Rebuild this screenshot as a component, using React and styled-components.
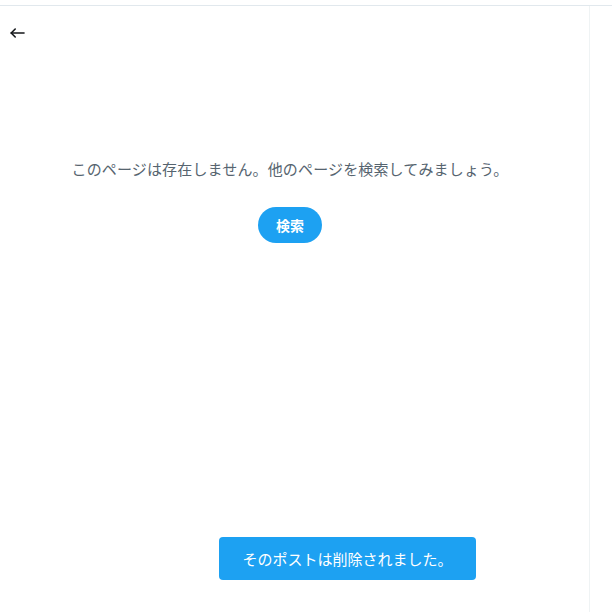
import React from "react";
import styled, { createGlobalStyle } from "styled-components";

const Global = createGlobalStyle`
  html, body { margin: 0; padding: 0; background: #ffffff; }
  body { font-family: "Noto Sans CJK JP", "Noto Sans", sans-serif; }
`;

const Page = styled.div`
  position: relative;
  width: 612px;
  height: 612px;
  overflow: hidden;
  display: flex;
  flex-direction: column;
`;

const TopRule = styled.div`
  height: 5px;
  flex: none;
  border-bottom: 1px solid #e1e8ed;
`;

const Body = styled.div`
  flex: 1;
  display: flex;
`;

const Column = styled.main`
  width: 589px;
  border-right: 1px solid #eff3f4;
  display: flex;
  flex-direction: column;
`;

const Header = styled.header`
  height: 53px;
  display: flex;
  align-items: center;
  padding-left: 10px;
`;

const BackButton = styled.button`
  border: 0;
  background: none;
  padding: 0;
  width: 15px;
  height: 10px;
  display: flex;
  color: #14171a;
  cursor: pointer;
`;

const Content = styled.section`
  width: 580px;
  display: flex;
  flex-direction: column;
  align-items: center;
  padding-top: 100px;
`;

const Message = styled.p`
  margin: 0;
  font-size: 15px;
  line-height: 20px;
  letter-spacing: 0.15px;
  color: #56646f;
`;

const SearchButton = styled.button`
  margin-top: 28px;
  width: 64px;
  height: 36px;
  border: 0;
  border-radius: 18px;
  background: #1da1f2;
  color: #ffffff;
  font-family: inherit;
  font-size: 14px;
  font-weight: 700;
  cursor: pointer;
`;

const Toast = styled.div`
  position: absolute;
  left: 219px;
  top: 537px;
  width: 257px;
  height: 43px;
  border-radius: 4px;
  background: #1da1f2;
  color: #ffffff;
  font-size: 15px;
  display: flex;
  align-items: center;
  justify-content: center;
`;

export default function App() {
  return (
    <Page>
      <Global />
      <TopRule />
      <Body>
        <Column>
          <Header>
            <BackButton aria-label="戻る">
              <svg width="15" height="10" viewBox="0 0 15 10" fill="none" stroke="currentColor" strokeWidth="1.6" strokeLinecap="round" strokeLinejoin="round">
                <path d="M14 5H1.2" />
                <path d="M5.2 1 1.2 5l4 4" />
              </svg>
            </BackButton>
          </Header>
          <Content>
            <Message>このページは存在しません。他のページを検索してみましょう。</Message>
            <SearchButton>検索</SearchButton>
          </Content>
        </Column>
      </Body>
      <Toast>そのポストは削除されました。</Toast>
    </Page>
  );
}
